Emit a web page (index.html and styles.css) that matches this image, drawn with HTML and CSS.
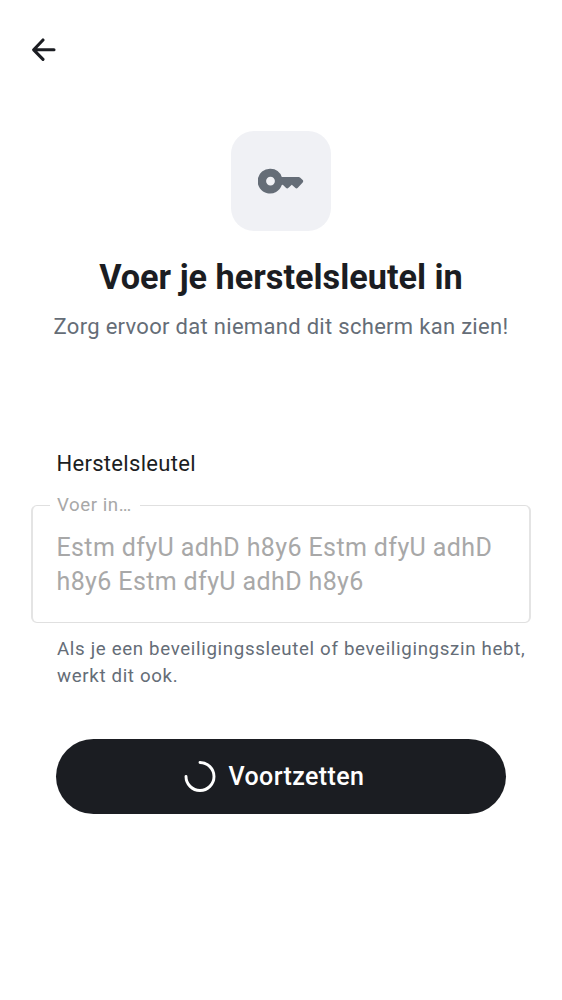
FILE: index.html
```html
<!DOCTYPE html>
<html lang="nl">
<head>
<meta charset="utf-8">
<title>Herstelsleutel</title>
<link rel="stylesheet" href="styles.css">
</head>
<body>
<main class="screen">
  <header class="topbar">
    <svg class="back" viewBox="0 0 24 24"><path d="M22 11.800H2M11 2 1.700 11.800 11 21.300" fill="none" stroke="currentColor" stroke-width="3.100" stroke-linecap="round" stroke-linejoin="round"/></svg>
  </header>
  <section class="intro">
    <div class="tile">
      <svg class="key" viewBox="0 0 46 26"><path fill="currentColor" fill-rule="evenodd" d="M12.500 .7A12.400 12.400 0 0 1 23.800 9H40.500Q41.600 9 42.300 9.700L44.700 12Q45.700 13.200 44.700 14.400L39.800 19.800Q38.500 21 37.200 19.800L33.800 16.800 30.500 19.800Q29.200 21 27.900 19.800L24.800 16.800 23.800 17A12.400 12.400 0 1 1 12.500 .7ZM12.500 8.700a4.400 4.400 0 1 0 0 8.800 4.400 4.400 0 0 0 0-8.800Z"/></svg>
    </div>
    <h1 class="title">Voer je herstelsleutel in</h1>
    <p class="subtitle">Zorg ervoor dat niemand dit scherm kan zien!</p>
  </section>
  <section class="form">
    <div class="label">Herstelsleutel</div>
    <fieldset class="field">
      <legend class="legend">Voer in…</legend>
      <div class="value">Estm dfyU adhD h8y6 Estm dfyU adhD<br>h8y6 Estm dfyU adhD h8y6</div>
    </fieldset>
    <p class="hint">Als je een beveiligingssleutel of beveiligingszin hebt,<br>werkt dit ook.</p>
  </section>
  <button class="submit">
    <svg class="spinner" viewBox="0 0 32 32"><path d="M15 1.500A14 14 0 1 1 1 15.500" fill="none" stroke="currentColor" stroke-width="2.900" stroke-linecap="round"/></svg>
    <span class="caption">Voortzetten</span>
  </button>
</main>
</body>
</html>
```

FILE: styles.css
```css
* { box-sizing: border-box; }
body { margin: 0; background: #fff; color: #1b1d22; font-family: Roboto, sans-serif; }
h1, p { margin: 0; white-space: nowrap; }
.screen { width: 562px; height: 1000px; display: flex; flex-direction: column; overflow: hidden; }
.topbar { height: 131px; padding: 38px 32px; }
.back { display: block; width: 24px; height: 24px; }
.intro { display: flex; flex-direction: column; align-items: center; }
.tile { width: 100px; height: 100px; border-radius: 23px; background: #f0f1f5; display: flex; align-items: center; justify-content: center; }
.key { width: 46px; height: 26px; color: #656d77; }
.title { margin-top: 25px; font-size: 34.250px; line-height: 42px; font-weight: 700; }
.subtitle { margin-top: 13px; font-size: 22px; line-height: 31px; letter-spacing: .3px; color: #656d77; }
.form { margin-top: 106px; padding: 0 31px; }
.label { padding-left: 25.500px; font-size: 22px; line-height: 32px; letter-spacing: .3px; }
.field { margin: 15px 0 0; height: 128px; padding: 16px 23px; border: 1px solid #e0e0e0; border-left: 2px solid #e4e4e4; border-right: 2px solid #e4e4e4; border-radius: 6px; min-width: 0; }
.legend { margin-left: -6px; padding: 0 8px 0 7px; font-size: 18.700px; line-height: 20px; letter-spacing: .55px; color: #a8a8a8; }
.value { padding-left: .5px; font-size: 25px; line-height: 34px; letter-spacing: .38px; color: #a8a8a8; white-space: nowrap; }
.hint { margin-top: 13px; padding-left: 26px; font-size: 18.700px; line-height: 27px; letter-spacing: .66px; color: #656d77; }
.submit { margin: 49px 56px 0; padding: 0 13px 0 0; height: 75px; border: 0; border-radius: 38px; background: #1b1d22; color: #fff; font-family: inherit; display: flex; align-items: center; justify-content: center; gap: 12px; }
.spinner { width: 32px; height: 32px; overflow: visible; }
.caption { font-size: 25px; line-height: 32px; font-weight: 500; letter-spacing: .4px; }
```
